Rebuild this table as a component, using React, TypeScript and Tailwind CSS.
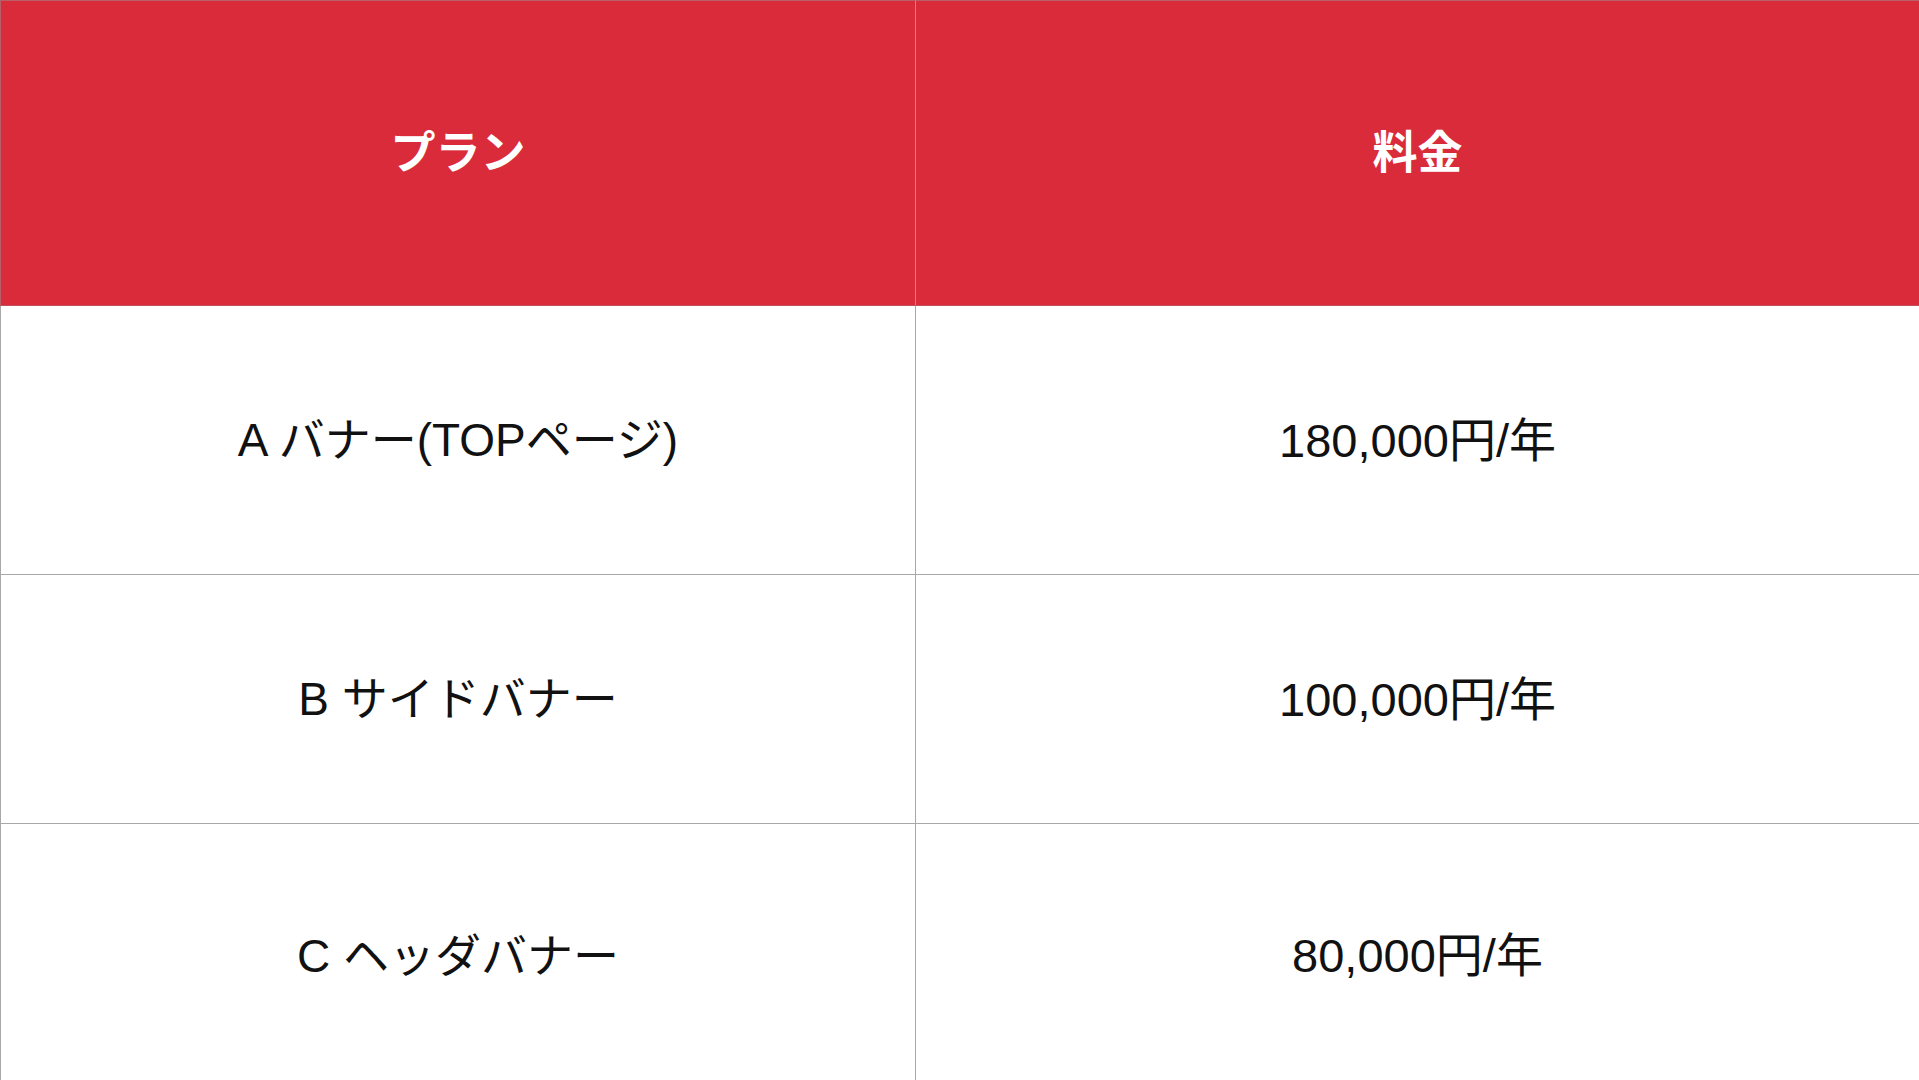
import React from "react";

const rows = [
  { plan: "A バナー(TOPページ)", price: "180,000円/年", h: "h-[269px]" },
  { plan: "B サイドバナー", price: "100,000円/年", h: "h-[249px]" },
  { plan: "C ヘッダバナー", price: "80,000円/年", h: "h-[264px]" },
];

export default function App() {
  return (
    <div
      className="w-[1919px] h-[1080px] overflow-hidden bg-white"
      style={{ fontFamily: '"Liberation Sans", "Noto Sans CJK JP", sans-serif' }}
    >
      <div className="grid grid-cols-[916px_1fr]">
        <div className="h-[306px] bg-[#da2b3b] border-t border-l border-r border-b border-t-[#b8606a] border-l-[#b8606a] border-r-[#e07c86] border-b-[#c0505c] flex items-center justify-center">
          <span className="text-white font-bold text-[45px] leading-none">プラン</span>
        </div>
        <div className="h-[306px] bg-[#da2b3b] border-t border-b border-t-[#b8606a] border-b-[#c0505c] flex items-center justify-center">
          <span className="text-white font-bold text-[45px] leading-none">料金</span>
        </div>
        {rows.map((r) => (
          <React.Fragment key={r.plan}>
            <div
              className={`${r.h} border-l border-r border-b border-[#a8a8a8] flex items-center justify-center`}
            >
              <span className="text-[#111111] text-[46px] leading-none">{r.plan}</span>
            </div>
            <div className={`${r.h} border-b border-[#a8a8a8] flex items-center justify-center`}>
              <span className="text-[#111111] text-[47px] leading-none">{r.price}</span>
            </div>
          </React.Fragment>
        ))}
      </div>
    </div>
  );
}
